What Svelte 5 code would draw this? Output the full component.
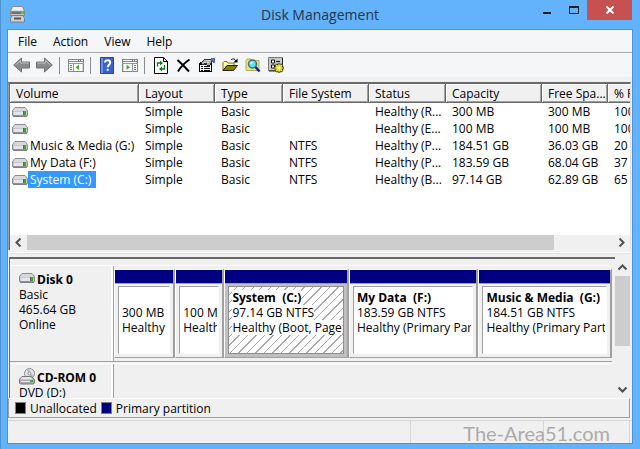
<script>
    const menus = ['File', 'Action', 'View', 'Help'];
    const columns = ['Volume', 'Layout', 'Type', 'File System', 'Status', 'Capacity', 'Free Spa...', '% Free'];

    const volumes = [
        { name: '', fs: '', status: 'Healthy (R...', capacity: '300 MB', free: '300 MB', percent: '100 %' },
        { name: '', fs: '', status: 'Healthy (E...', capacity: '100 MB', free: '100 MB', percent: '100 %' },
        { name: 'Music & Media (G:)', fs: 'NTFS', status: 'Healthy (P...', capacity: '184.51 GB', free: '36.03 GB', percent: '20 %' },
        { name: 'My Data (F:)', fs: 'NTFS', status: 'Healthy (P...', capacity: '183.59 GB', free: '68.04 GB', percent: '37 %' },
        { name: 'System (C:)', fs: 'NTFS', status: 'Healthy (B...', capacity: '97.14 GB', free: '62.89 GB', percent: '65 %' }
    ];

    // share is the relative width of the block in the disk row
    const partitions = [
        { name: '', size: '300 MB', status: 'Healthy', share: 58 },
        { name: '', size: '100 MB', status: 'Healthy', share: 46 },
        { name: 'System  (C:)', size: '97.14 GB NTFS', status: 'Healthy (Boot, Page', share: 121 },
        { name: 'My Data  (F:)', size: '183.59 GB NTFS', status: 'Healthy (Primary Partition)', share: 126 },
        { name: 'Music & Media  (G:)', size: '184.51 GB NTFS', status: 'Healthy (Primary Partition)', share: 130 }
    ];

    let selected = $state(4);
    let active = $state(2);
</script>

{#snippet drive()}
    <svg class="drive" width="16" height="10" viewBox="0 0 16 10" aria-hidden="true">
        <path d="M3 .5h10l2.5 3v5l-1 1h-13l-1-1v-5z" fill="#a9a9b0" stroke="#8a8a90" />
        <path d="M3 1h10l2 3H1z" fill="#d9d9dd" />
        <path d="M1.500 4.500h13v3.500h-13z" fill="#e4e4ec" />
        <path d="M1 9h14" stroke="#77777c" />
        <path d="M12 4h2v4h-2z" fill="#2fae1e" />
        <path d="M11 4h1v4h-1z" fill="#5a6a5a" />
    </svg>
{/snippet}

{#snippet chevron(d)}
    <svg width="9" height="9" viewBox="0 0 9 9" aria-hidden="true"><path {d} fill="none" stroke="#505050" stroke-width="2" /></svg>
{/snippet}

<div class="window">
    <header class="titlebar">
        <svg width="17" height="17" viewBox="0 0 17 17" aria-hidden="true">
            <path d="M3.500.5h10l2 4.500v4.500h-14V5z" fill="#c4c4c4" stroke="#8a8a8a" />
            <path d="M4 1h9l1.500 3.500h-12z" fill="#f2f2f2" />
            <path d="M2 5h13v3H2z" fill="#8e8e8e" />
            <path d="M3 7h9" stroke="#555" />
            <path d="M3 9.500h11l1.500 3v3.500h-14v-3.500z" fill="#d0d0d0" stroke="#808080" />
            <path d="M5 12.500h7" stroke="#555" stroke-width="2" />
            <path d="M12 5h2v3h-2z" fill="#36e321" />
        </svg>
        <h1>Disk Management</h1>
        <div class="controls">
            <button aria-label="Minimize"><svg width="10" height="8" viewBox="0 0 10 8"><path d="M1 7h8" stroke="#1e1e1e" stroke-width="2" /></svg></button>
            <button aria-label="Maximize"><svg width="10" height="8" viewBox="0 0 10 8"><path d="M.5 0v7.500h9V0" fill="none" stroke="#1e1e1e" /><path d="M0 1h10" stroke="#1e1e1e" stroke-width="2" /></svg></button>
            <button class="close" aria-label="Close"><svg width="8" height="8" viewBox="0 0 8 8"><path d="M.5.5l7 7M7.500.5l-7 7" stroke="#fff" stroke-width="2" /></svg></button>
        </div>
    </header>

    <main>
        <nav class="menubar">
            {#each menus as menu}
                <button>{menu}</button>
            {/each}
        </nav>

        <div class="toolbar">
            <button aria-label="Back">
                <svg width="17" height="16" viewBox="0 0 17 16"><path d="M.7 8l7.800-7v4h8v6h-8v4z" fill="#8a8a8a" stroke="#707070" /><path d="M2.500 8L7.500 3.500v2.500h8" fill="none" stroke="#c2c2c2" /></svg>
            </button>
            <button aria-label="Forward">
                <svg width="17" height="16" viewBox="0 0 17 16"><path d="M16.300 8L8.500 1v4h-8v6h8v4z" fill="#8a8a8a" stroke="#707070" /><path d="M14.500 8L9.500 3.500v2.500h-8" fill="none" stroke="#c2c2c2" /></svg>
            </button>
            <i></i>
            <button aria-label="Show console tree">
                <svg width="16" height="16" viewBox="0 0 16 16" shape-rendering="crispEdges">
                    <path d="M.5 2.500h15v12H.5z" fill="#fff" stroke="#7b8794" />
                    <path d="M0 2h16v3H0z" fill="#7b8794" /><path d="M1 3h9v1H1zM11 3h1v1h-1zM13 3h2v1h-2z" fill="#fff" />
                    <path d="M0 6h16v1H0zM5 6h1v9H5z" fill="#8b97a5" />
                    <path d="M2 8h2v1H2zM2 10h2v1H2zM2 12h2v1H2z" fill="#5f7185" />
                    <path d="M14 7h1v7h-1z" fill="#d2d6da" />
                    <path d="M11 7.500v5.500L7.500 10.200z" fill="#3fb42a" shape-rendering="auto" />
                </svg>
            </button>
            <i></i>
            <button aria-label="Help">
                <svg width="14" height="17" viewBox="0 0 14 17">
                    <path d="M.5.5h13v16H.5z" fill="#3b62c9" stroke="#2b4794" /><path d="M1 1h2v15H1z" fill="#6f8fe0" />
                    <path d="M5 5.500C5 2.600 10.200 2.600 10.200 5.700c0 2-2.500 2-2.500 4.500" fill="none" stroke="#fff" stroke-width="2" /><path d="M6.700 11.800h2v2h-2z" fill="#fff" />
                </svg>
            </button>
            <button aria-label="Show action pane">
                <svg width="16" height="16" viewBox="0 0 16 16" shape-rendering="crispEdges">
                    <path d="M.5 2.500h15v12H.5z" fill="#fff" stroke="#7b8794" />
                    <path d="M0 2h16v3H0z" fill="#7b8794" /><path d="M1 3h9v1H1zM11 3h1v1h-1zM13 3h2v1h-2z" fill="#fff" />
                    <path d="M0 6h16v1H0zM10 6h1v9h-1z" fill="#8b97a5" />
                    <path d="M12 8h2v1h-2zM12 10h2v1h-2zM12 12h2v1h-2z" fill="#5f7185" />
                    <path d="M1 7h1v7H1z" fill="#d2d6da" />
                    <path d="M4.500 7.500v5.500L8 10.200z" fill="#3fb42a" shape-rendering="auto" />
                </svg>
            </button>
            <i></i>
            <button aria-label="Refresh">
                <svg width="14" height="17" viewBox="0 0 14 17">
                    <path d="M.5.5h9l4 4v12H.5z" fill="#fff" stroke="#000" /><path d="M9.500.5v4h4" fill="none" stroke="#000" />
                    <path d="M3.500 9.500V6h3M10.500 8v4h-3" fill="none" stroke="#087a18" stroke-width="1.300" />
                    <path d="M6 3.500v5L9 6zM8 9.500v5L5 12z" fill="#087a18" />
                </svg>
            </button>
            <button aria-label="Delete">
                <svg width="15" height="15" viewBox="0 0 15 15"><path d="M1.500 2C5 5 9 9 13 13.500" fill="none" stroke="#000" stroke-width="2" /><path d="M13.500 1.500C9 4.500 5 8.500 2 13.500" fill="none" stroke="#000" stroke-width="2" /></svg>
            </button>
            <button aria-label="Properties">
                <svg width="16" height="16" viewBox="0 0 16 16" shape-rendering="crispEdges">
                    <path d="M.5 6.500h12v8H.5z" fill="#fff" stroke="#000" /><path d="M1 5h10v3H1z" fill="#000" />
                    <path d="M2 9.500h2M5 9.500h6M2 11.500h2M5 11.500h6M2 13.500h2M5 13.500h6" stroke="#000" />
                    <path d="M2 6l4-4h6l1 2-2 4H8L7 6 4 8z" fill="#a9a9a9" stroke="#333" /><path d="M5 5h2M7 3.500h4M8 5.500h2" stroke="#ddd" />
                    <path d="M12 1h4v5h-2l-2-2z" fill="#5c66a8" />
                </svg>
            </button>
            <button aria-label="Open">
                <svg width="16" height="16" viewBox="0 0 16 16">
                    <path d="M1 13.500V5.500l1-1h3l1 1.500h6v2.500H5z" fill="#ffff9c" stroke="#7c7800" /><path d="M1 13.500l4-5h10.500l-4 5z" fill="#858000" stroke="#000" stroke-width=".8" />
                    <path d="M9 3c2-2 4-1 5 1" fill="none" stroke="#000" /><path d="M15.500 1.500v4h-4z" fill="#000" />
                </svg>
            </button>
            <button aria-label="Find">
                <svg width="16" height="16" viewBox="0 0 16 16">
                    <path d="M1 13.500v-10L2 2h4l1 1.500h7v10z" fill="#efe27a" stroke="#b5ae60" />
                    <circle cx="7.500" cy="7" r="4" fill="#55e5ef" stroke="#496e77" stroke-width="1.500" /><path d="M5.500 7l2-2" stroke="#fff" stroke-width="1.500" />
                    <path d="M10.500 10l4 4.500" stroke="#0b20c4" stroke-width="2.500" />
                </svg>
            </button>
            <button aria-label="Settings">
                <svg width="16" height="16" viewBox="0 0 16 16">
                    <path d="M.5.5h14v13H.5z" fill="#c9c9c9" stroke="#777" /><path d="M14.500 1v13H1" fill="none" stroke="#222" />
                    <path d="M3.500 3h3v3h-3zM3.500 8h3v3h-3z" fill="#fff" stroke="#111" />
                    <path d="M8 4.500h4M8 7.500h2" stroke="#111" />
                    <path d="M11 6v10M6 11h10M7.500 7.500l7 7M14.500 7.500l-7 7" stroke="#4b4600" stroke-width="2.500" />
                    <circle cx="11" cy="11" r="3" fill="#eee23a" /><path d="M11 6.500v9M6.500 11h9M8 8l6 6M14 8l-6 6" stroke="#eee23a" stroke-width="1.200" /><circle cx="11" cy="11" r="1.200" fill="#fff" />
                </svg>
            </button>
        </div>

        <section class="volumes">
            <div class="table-view">
                <table>
                    <colgroup>
                        <col class="c-volume" /><col class="c-layout" /><col class="c-type" /><col class="c-fs" />
                        <col class="c-status" /><col class="c-capacity" /><col class="c-free" /><col class="c-percent" />
                    </colgroup>
                    <thead>
                        <tr>
                            {#each columns as column}
                                <th>{column}</th>
                            {/each}
                        </tr>
                    </thead>
                    <tbody>
                        {#each volumes as volume, i}
                            <tr onclick={() => (selected = i)}>
                                <td class="name">
                                    <div>{@render drive()}{#if volume.name}<span class:selected={selected === i}>{volume.name}</span>{/if}</div>
                                </td>
                                <td>Simple</td>
                                <td>Basic</td>
                                <td>{volume.fs}</td>
                                <td>{volume.status}</td>
                                <td>{volume.capacity}</td>
                                <td>{volume.free}</td>
                                <td>{volume.percent}</td>
                            </tr>
                        {/each}
                    </tbody>
                </table>
            </div>
            <div class="hscroll">
                <button aria-label="Scroll left">{@render chevron('M6.5 0.5l-4 4 4 4')}</button>
                <div class="track"><div class="thumb"></div></div>
                <button aria-label="Scroll right">{@render chevron('M2.5 0.5l4 4-4 4')}</button>
            </div>
        </section>

        <section class="graphical">
            <div class="disks">
                <div class="disk">
                    <div class="disk-label">
                        <strong>{@render drive()}Disk 0</strong>
                        <span>Basic</span>
                        <span>465.64 GB</span>
                        <span>Online</span>
                    </div>
                    <div class="partitions">
                        {#each partitions as part, i}
                            <button class="partition" class:active={active === i} style="flex-grow: {part.share}" onclick={() => (active = i)}>
                                <span class="stripe"></span>
                                <span class="box">
                                    <span class="lines">
                                        <b>{part.name || '\u00a0'}</b>
                                        <span>{part.size}</span>
                                        <span>{part.status}</span>
                                    </span>
                                </span>
                            </button>
                        {/each}
                    </div>
                </div>
                <div class="disk cdrom">
                    <div class="disk-label">
                        <strong>
                            <svg class="cd" width="16" height="17" viewBox="0 0 16 17" aria-hidden="true">
                                <circle cx="10.500" cy="5.500" r="5" fill="#e2e2e8" stroke="#8d8d95" /><path d="M10.500 5.500l-3-4h3zM10.500 5.500l4 2-2 2.500z" fill="#a8b8bd" />
                                <circle cx="10.500" cy="5.500" r="1.500" fill="#fff" stroke="#888" />
                                <path d="M3 8.500h9l3.500 3v3.500l-1 1h-13l-1-1v-3.500z" fill="#a8a8ad" stroke="#77777b" />
                                <path d="M3 9h8.500l3 2.500H1.500z" fill="#e5e5e9" /><path d="M2 13.500h9" stroke="#ececef" /><path d="M11 12h3v2h-3z" fill="#37b52a" />
                            </svg>CD-ROM 0
                        </strong>
                        <span>DVD (D:)</span>
                    </div>
                </div>
            </div>
            <div class="vscroll">
                <button aria-label="Scroll up">{@render chevron('M0.5 6.5l4-4 4 4')}</button>
                <div class="track"><div class="thumb"></div></div>
                <button aria-label="Scroll down">{@render chevron('M0.5 2.5l4 4 4-4')}</button>
            </div>
        </section>

        <div class="legend">
            <span class="swatch unallocated"></span>Unallocated
            <span class="swatch primary"></span>Primary partition
        </div>

        <footer class="statusbar">
            <span></span><span></span><span></span>
            <div class="watermark">The-Area51.com</div>
        </footer>
    </main>
</div>

<style>
    :global(body) {
        margin: 0;
    }

    .window {
        box-sizing: border-box;
        display: flex;
        flex-direction: column;
        height: 100vh;
        min-height: 420px;
        padding: 0 8px 6px 7px;
        border-left: 1px solid #4e93cf;
        background: #63b2fc;
        color: #000;
        font: 12px/15px "Open Sans", sans-serif;
        overflow: hidden;
    }

    button {
        display: flex;
        align-items: center;
        justify-content: center;
        padding: 0;
        border: 0;
        background: none;
        color: inherit;
        font: inherit;
    }

    svg {
        flex: none;
    }

    .titlebar {
        display: grid;
        grid-template-columns: 1fr auto 1fr;
        height: 29px;
        flex: none;
    }

    .titlebar > svg {
        margin: 6px 1px;
    }

    h1 {
        margin: 0;
        color: #253648;
        font-size: 14px;
        font-weight: 400;
        line-height: 30px;
    }

    .controls {
        display: flex;
        justify-content: flex-end;
        align-items: flex-start;
    }

    .controls button {
        width: 27px;
        height: 20px;
    }

    .controls .close {
        width: 45px;
        background: #c75050;
    }

    main {
        display: flex;
        flex-direction: column;
        flex: 1;
        min-height: 0;
        background: #f0f0f0;
        outline: 1px solid #4a94d6;
        margin-top: 1px;
    }

    .menubar {
        display: flex;
        height: 22px;
        flex: none;
        padding-left: 2px;
        background: #f5f6f7;
        border-bottom: 1px solid #a8a8a8;
    }

    .menubar button {
        padding: 0 8px;
    }

    .toolbar {
        display: flex;
        align-items: center;
        height: 24px;
        flex: none;
        padding-left: 2px;
        background: #f5f6f7;
        margin-bottom: 5px;
    }

    .toolbar button {
        width: 23px;
        height: 24px;
    }

    .toolbar i {
        width: 1px;
        height: 17px;
        margin: 0 4px 0 3px;
        background: #8c8c8c;
    }

    .volumes {
        display: flex;
        flex-direction: column;
        flex: 1;
        min-height: 0;
        margin: 0 1px 3px 0;
        border: 1px solid #a0a0a0;
        border-top: 2px solid #696969;
        border-right-color: #e3e3e3;
        border-bottom: 0;
        box-shadow: inset 1px 0 #696969;
        padding-left: 1px;
        background: #fff;
    }

    .table-view {
        flex: 1;
        overflow: hidden;
    }

    table {
        width: 650px;
        table-layout: fixed;
        border-collapse: collapse;
    }

    .c-volume { width: 129px; }
    .c-layout { width: 76px; }
    .c-type { width: 68px; }
    .c-fs { width: 86px; }
    .c-status { width: 77px; }
    .c-capacity { width: 96px; }
    .c-free { width: 66px; }
    .c-percent { width: 52px; }

    th {
        height: 19px;
        padding: 0 0 0 6px;
        background: #f0f0f0;
        box-shadow: inset -1px -1px #696969, inset 1px 1px #fff, inset -2px -2px #a0a0a0;
        font-weight: 400;
        text-align: left;
        white-space: nowrap;
    }

    td {
        height: 17px;
        padding: 0 0 0 6px;
        line-height: 17px;
        white-space: nowrap;
    }

    .name {
        padding-left: 2px;
    }

    .name div {
        display: flex;
        align-items: center;
    }

    .name span {
        padding: 0 5px 0 2px;
    }

    .name .selected {
        background: #3399ff;
        color: #fff;
    }

    .hscroll {
        display: flex;
        height: 15px;
        flex: none;
        background: #f0f0f0;
    }

    .hscroll button {
        width: 17px;
    }

    .hscroll .track {
        flex: 1;
    }

    .hscroll .thumb {
        width: 90%;
        height: 100%;
        background: #cdcdcd;
    }

    .graphical {
        display: flex;
        height: 144px;
        flex: none;
        margin: 0 2px 0 1px;
        border-top: 1px solid #e3e3e3;
        box-shadow: 0 -1px #fff;
    }

    .disks {
        flex: 1;
        min-width: 0;
        margin-top: 3px;
        padding: 6px 3px 0 0;
        border-top: 2px solid #696969;
        border-left: 1px solid #696969;
        overflow: hidden;
    }

    .disk {
        box-sizing: border-box;
        display: flex;
        height: 97px;
        border-top: 1px solid #fff;
        border-bottom: 1px solid #a0a0a0;
        margin-bottom: 1px;
    }

    .disk-label {
        display: flex;
        flex-direction: column;
        box-sizing: border-box;
        flex: none;
        width: 104px;
        padding: 6px 0 0 9px;
        border-right: 1px solid #a0a0a0;
        box-shadow: inset -2px 0 #fff;
    }

    .disk-label strong {
        display: flex;
        align-items: center;
        height: 15px;
    }

    .disk-label .drive {
        margin: 0 2px 3px 0;
    }

    .cdrom .cd {
        margin: 0 2px 3px 0;
    }

    .partitions {
        display: flex;
        flex: 1;
        min-width: 0;
        height: 89px;
        margin-top: 3px;
    }

    .partition {
        display: flex;
        flex-direction: column;
        align-items: stretch;
        justify-content: flex-start;
        box-sizing: border-box;
        flex: 1 1 0;
        min-width: 0;
        border-top: 1px solid #fff;
        border-left: 1px solid #fff;
        border-right: 2px solid #a0a0a0;
        border-bottom: 1px solid #a0a0a0;
        text-align: left;
    }

    .stripe {
        height: 13px;
        flex: none;
        background: #000080;
        border-bottom: 1px solid #a0a0a0;
    }

    .box {
        flex: 1;
        min-width: 0;
        margin: 2px 3px 3px;
        padding: 3px 1px 0 3px;
        border: 1px solid #a0a0a0;
        border-right-color: #fff;
        border-bottom-color: #fff;
        background: #fff;
    }

    .active {
        background: #c0c0c0;
    }

    .active .box {
        border-color: #8e8e8e;
        background: repeating-linear-gradient(135deg, #fff 0 5px, #aaa 5px 6px);
    }

    .lines {
        display: block;
        overflow: hidden;
    }

    .lines > * {
        display: block;
        width: fit-content;
        background: #fff;
        white-space: pre;
    }

    .vscroll {
        display: flex;
        flex-direction: column;
        width: 15px;
        margin-top: 5px;
    }

    .vscroll button {
        height: 17px;
    }

    .vscroll .track {
        flex: 1;
    }

    .vscroll .thumb {
        height: 67%;
        background: #cdcdcd;
    }

    .legend {
        display: flex;
        align-items: center;
        height: 18px;
        flex: none;
        gap: 4px;
        margin-right: 2px;
        padding-left: 6px;
        border: 1px solid #a0a0a0;
        border-top-color: #fff;
    }

    .swatch {
        box-sizing: border-box;
        width: 11px;
        height: 12px;
        border: 1px solid #808080;
    }

    .unallocated { background: #000; }
    .primary { background: #000080; }

    .statusbar {
        position: relative;
        display: grid;
        grid-template-columns: 403px 133px 1fr;
        height: 22px;
        flex: none;
        margin-top: 2px;
        padding-right: 2px;
        border-top: 1px solid #d7d7d7;
    }

    .statusbar span {
        border-right: 1px solid #d7d7d7;
    }

    .watermark {
        position: absolute;
        right: 22px;
        top: 0;
        color: #ababab;
        font: 20px/24px Lato, sans-serif;
    }
</style>
